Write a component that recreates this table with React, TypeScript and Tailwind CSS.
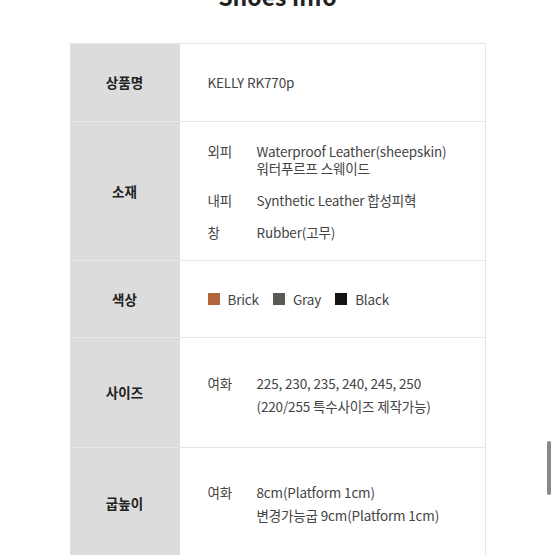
const font = { fontFamily: '"Noto Sans CJK KR", "Noto Sans", sans-serif' }

function Label({ children }: { children: React.ReactNode }) {
  return (
    <div className="flex w-[110px] shrink-0 items-center justify-center bg-[#dcdcdc] text-[13.5px] font-bold text-[#222]">
      {children}
    </div>
  )
}

function Row({ label, h, children }: { label: string; h: string; children: React.ReactNode }) {
  return (
    <div className={`flex border-b border-[#e6e6e6] ${h}`}>
      <Label>{label}</Label>
      <div className="flex flex-1 flex-col justify-center pl-[28px] text-[13.5px] tracking-[-0.15px] text-[#444]">
        {children}
      </div>
    </div>
  )
}

function Sub({ name, lines, lh }: { name: string; lines: string[]; lh: string }) {
  return (
    <div className={`flex ${lh}`}>
      <div className="w-[49px] shrink-0">{name}</div>
      <div>
        {lines.map((l) => (
          <div key={l}>{l}</div>
        ))}
      </div>
    </div>
  )
}

const colors = [
  { name: 'Brick', hex: 'bg-[#b0653a]' },
  { name: 'Gray', hex: 'bg-[#595956]' },
  { name: 'Black', hex: 'bg-[#141414]' },
]

export default function App() {
  return (
    <div className="h-[555px] overflow-hidden bg-white" style={font}>
      <h1 className="mt-[-19px] text-center text-[23px] font-bold leading-[30px] text-[#222]">Shoes Info</h1>
      <div className="mx-auto mt-[32px] w-[416px] border-t border-r border-[#e6e6e6]">
        <Row label="상품명" h="h-[78px]">
          <div>KELLY RK770p</div>
        </Row>
        <Row label="소재" h="h-[139px]">
          <div className="flex flex-col gap-[15px] pt-[2px]">
            <Sub name="외피" lh="leading-[17px]" lines={['Waterproof Leather(sheepskin)', '워터푸르프 스웨이드']} />
            <Sub name="내피" lh="leading-[17px]" lines={['Synthetic Leather 합성피혁']} />
            <Sub name="창" lh="leading-[17px]" lines={['Rubber(고무)']} />
          </div>
        </Row>
        <Row label="색상" h="h-[77px]">
          <div className="flex items-center">
            {colors.map((c) => (
              <div key={c.name} className="mr-[14px] flex items-center">
                <span className={`mr-[8px] inline-block size-[12px] ${c.hex}`} />
                <span>{c.name}</span>
              </div>
            ))}
          </div>
        </Row>
        <Row label="사이즈" h="h-[110px]">
          <div className="pt-[4px]">
            <Sub name="여화" lh="leading-[23px]" lines={['225, 230, 235, 240, 245, 250', '(220/255 특수사이즈 제작가능)']} />
          </div>
        </Row>
        <Row label="굽높이" h="h-[112px]">
          <Sub name="여화" lh="leading-[23px]" lines={['8cm(Platform 1cm)', '변경가능굽 9cm(Platform 1cm)']} />
        </Row>
      </div>
      <div className="fixed left-[547px] top-[441px] h-[54px] w-[4px] rounded-full bg-[#8a8a8a]" />
    </div>
  )
}
